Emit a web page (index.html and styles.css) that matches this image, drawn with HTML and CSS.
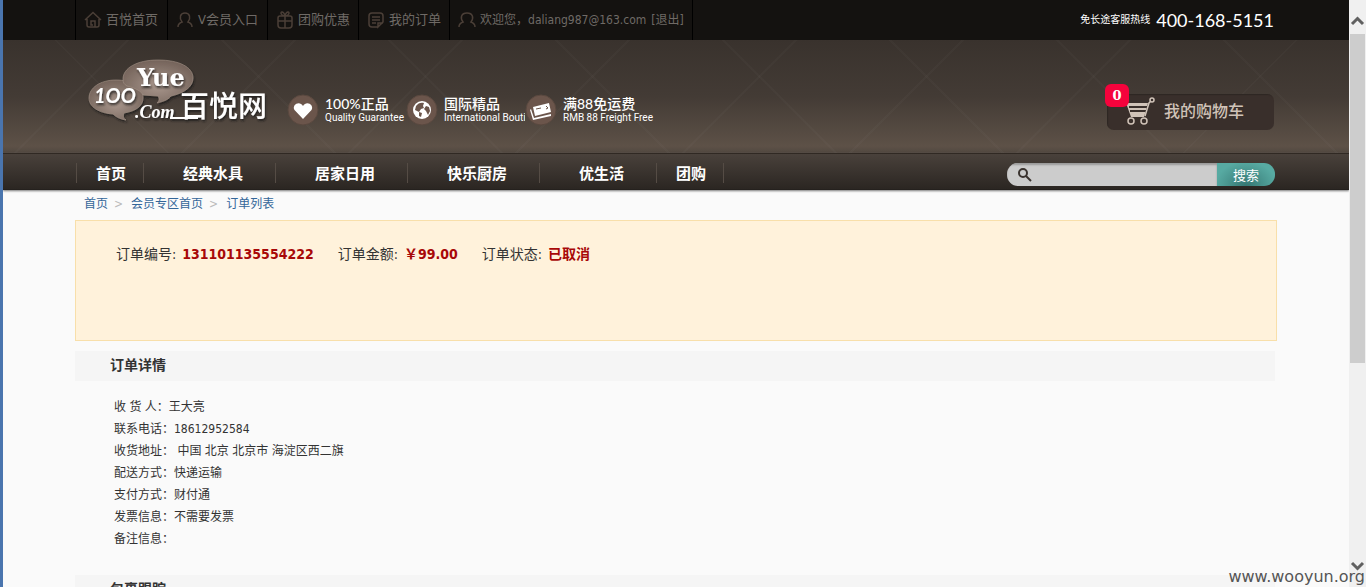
FILE: index.html
```html
<!DOCTYPE html>
<html lang="zh-CN">
<head>
<meta charset="utf-8">
<title>订单详情 - 百悦网</title>
<link rel="stylesheet" href="styles.css">
</head>
<body>
<div class="window">
  <div class="page">
    <div class="topbar">
      <div class="container topbar-inner">
        <nav class="toplinks">
          <a class="toplink wide" href="#"><svg width="20" height="20" viewBox="0 0 20 20"><path d="M2 10 10 2.500l8 7.500M4 9v6q0 2 2 2h8q2 0 2-2V9M12 17v-6H8v4h2"/></svg>百悦首页</a>
          <a class="toplink wide" href="#"><svg width="20" height="20" viewBox="0 0 20 20"><path d="M3 17c0-3 1-4 4-5-3-4-2-9 3-9s6 5 3 9c3 1 4 2 4 5"/></svg>V会员入口</a>
          <a class="toplink" href="#"><svg width="20" height="20" viewBox="0 0 20 20"><path d="M5 6h10q2 0 2 2v7q0 3-3 3H6q-3 0-3-3V8q0-2 2-2zM10 6v12M3 11h14M10 6C6 6 5 2 7 2s3 4 3 4 1-4 3-4 1 4-3 4"/></svg>团购优惠</a>
          <a class="toplink" href="#"><svg width="20" height="20" viewBox="0 0 20 20"><path d="M12 17H6q-3 0-3-3V6q0-3 3-3h8q3 0 3 3v6l-5 5v-4h5M6 7h8M6 10h8M6 13h4"/></svg>我的订单</a>
          <span class="toplink user"><svg width="20" height="20" viewBox="0 0 20 20"><path d="M2 17c0-3 1-4 4-5-3-4-2-9 4-9s7 5 4 9c3 1 4 2 4 5"/></svg>欢迎您，daliang987@163.com <a class="logout" href="#">[退出]</a></span>
        </nav>
        <p class="hotline"><span>免长途客服热线</span><strong>400-168-5151</strong></p>
      </div>
    </div>

    <header class="header">
      <div class="container header-inner">
        <a class="logo" href="#" aria-label="百悦网">
          <svg width="190" height="70" viewBox="0 0 190 70">
            <defs>
              <radialGradient id="bubble" cx="50%" cy="60%" r="60%"><stop offset="0" stop-color="#a8968c"/><stop offset="1" stop-color="#74635a"/></radialGradient>
              <filter id="shade" x="-10%" y="-10%" width="130%" height="140%"><feDropShadow dx="1" dy="2" stdDeviation="1" flood-color="#1d1815" flood-opacity=".8"/></filter>
            </defs>
            <g filter="url(#shade)" fill="url(#bubble)" stroke="#a39287" stroke-width=".6">
              <path d="M31 25C15 25 4 33 4 43c0 9 10 15 24 16 3 3 7 5 13 6-3-2-3-4-2-7 12-2 19-7 19-15 0-11-11-18-27-18z"/>
              <path d="M73 5C52 5 38 13 38 24c0 4 1 5 4 7 9 2 15 6 16 9l15 1c2 3 1 5-1 7 8-2 12-4 14-7 13-3 22-9 22-18C108 12 94 5 73 5z"/>
            </g>
            <g class="logo-text" filter="url(#shade)">
              <text x="52" y="31" class="logo-yue">Yue</text>
              <text x="9" y="48" class="logo-hundred">1OO</text>
              <text x="50" y="63" class="logo-com">.Com</text>
              <path d="M85 63h28" stroke="#fff" stroke-width="2"/>
              <text x="95" y="62" class="logo-cn">百悦网</text>
            </g>
          </svg>
        </a>
        <ul class="promises">
          <li><svg width="32" height="32" viewBox="0 0 32 32"><circle class="disc" cx="16" cy="16" r="15"/><path class="white" d="M16 25 7.500 16c-3-5 5-10 8.500-4 3.500-6 11.500-1 8.500 4z"/></svg><p><strong>100%正品</strong><small>Quality Guarantee</small></p></li>
          <li><svg width="32" height="32" viewBox="0 0 32 32"><circle class="disc" cx="16" cy="16" r="15"/><circle class="white" cx="16" cy="16" r="9"/><path class="land" d="M10 12c2-3 5-4 8-3l-1 3 1 2-3 1-2 3-4-2zM13 18l3 1-1 4-2-1zM20 12l3 1 1 4-2 4-2-4-2-2z"/></svg><p class="clipped"><strong>国际精品</strong><small>International Boutique</small></p></li>
          <li><svg width="32" height="32" viewBox="0 0 32 32"><circle class="disc" cx="16" cy="16" r="15"/><path class="white" d="m8 13 16-4 2 9-16 4zM6 15l3 9 17-4v2L8 26 5 16z"/><path class="mark" d="m11 15 5-1M21 12l2 2-2 1"/></svg><p><strong>满88免运费</strong><small>RMB 88 Freight Free</small></p></li>
        </ul>
        <a class="cart" href="#">
          <span class="badge">0</span>
          <svg width="32" height="30" viewBox="0 0 32 30"><path class="basket" d="M2 6h22l-4 14H7z"/><path class="slots" d="M5 10h18M6 14h16"/><path class="rail" d="m21 19 4-13 2-2"/><circle class="wheel" cx="28" cy="3" r="2"/><circle class="wheel" cx="7" cy="24" r="3"/><circle class="wheel" cx="20" cy="24" r="3"/></svg>
          我的购物车
        </a>
      </div>
    </header>

    <div class="navbar">
      <div class="container navbar-inner">
        <nav class="menu">
          <a class="tight" href="#">首页</a><a href="#">经典水具</a><a href="#">居家日用</a><a href="#">快乐厨房</a><a href="#">优生活</a><a class="tight" href="#">团购</a>
        </nav>
        <form class="search">
          <label class="search-box"><svg width="16" height="16" viewBox="0 0 16 16"><circle cx="6" cy="6" r="4"/><path d="m9 9 5 5"/></svg><input type="text" aria-label="搜索"></label>
          <button type="button">搜索</button>
        </form>
      </div>
    </div>

    <main class="container">
      <nav class="crumbs"><a href="#">首页</a><span>&gt;</span><a href="#">会员专区首页</a><span>&gt;</span><a href="#">订单列表</a></nav>
      <section class="summary">
        <p>订单编号: <b>131101135554222</b></p>
        <p>订单金额: <b>￥99.00</b></p>
        <p>订单状态: <b>已取消</b></p>
      </section>
      <h2 class="bar">订单详情</h2>
      <ul class="details">
        <li>收 货 人：王大亮</li>
        <li>联系电话：18612952584</li>
        <li>收货地址： 中国 北京 北京市 海淀区西二旗</li>
        <li>配送方式：快递运输</li>
        <li>支付方式：财付通</li>
        <li>发票信息：不需要发票</li>
        <li>备注信息：</li>
      </ul>
      <h2 class="bar">包裹跟踪</h2>
    </main>
  </div>
  <div class="scrollbar">
    <svg width="17" height="34" viewBox="0 0 17 34"><path d="m3 24 5.500-5.500L14 24"/></svg>
    <div class="thumb"></div>
    <svg width="17" height="34" viewBox="0 0 17 34"><path d="m3 10 5.500 5.500L14 10"/></svg>
  </div>
  <p class="watermark">www.wooyun.org</p>
</div>
</body>
</html>
```
FILE: styles.css
```css
* { box-sizing: border-box; }
body, p, ul, h2 { margin: 0; padding: 0; }
ul { list-style: none; }
a { color: inherit; text-decoration: none; }
svg { flex: none; }
body {
  font: 12px/22px "DejaVu Sans Condensed", "Noto Sans CJK SC", sans-serif;
  color: #333;
  background: #fafafa;
}
.window {
  display: flex;
  height: 100vh;
  overflow: hidden;
  position: relative;
  border-left: 3px solid #4a75ae;
}
.page { flex: 1; min-width: 0; overflow: hidden; }
.container { max-width: 1202px; margin: 0 auto; }

.topbar { background: #141210; color: #6f6a66; }
.topbar-inner { display: flex; justify-content: space-between; align-items: center; height: 40px; }
.toplinks { display: flex; border-left: 1px solid #000; }
.toplink {
  display: flex;
  align-items: center;
  gap: 3px;
  height: 40px;
  padding: 0 8px 0 7px;
  border-right: 1px solid #000;
  font-size: 13px;
  white-space: nowrap;
}
.toplink.wide { padding-right: 9px; }
.toplink svg { fill: none; stroke: #4b3f37; stroke-width: 1.500; }
.user { font-size: 12px; }
.logout { margin-left: 2px; }
.hotline { display: flex; align-items: center; gap: 6px; color: #fff; font-size: 10px; padding-right: 3px; white-space: nowrap; }
.hotline strong { font: 18px/22px Lato, sans-serif; }

.header {
  background:
    repeating-linear-gradient(45deg, transparent 0 116px, rgba(255,255,255,.02) 116px 118px),
    repeating-linear-gradient(-45deg, transparent 0 116px, rgba(255,255,255,.02) 116px 118px),
    linear-gradient(#39322d, #433b35 50%, #5d5147 94%, #514840);
}
.header-inner { display: flex; align-items: center; height: 113px; }
.logo { align-self: flex-start; margin: 15px 0 0 10px; display: block; height: 70px; }
.logo-text { fill: #fff; }
.logo-yue { font: bold 24px "DejaVu Serif", serif; }
.logo-hundred { font: italic bold 20px Lato, sans-serif; }
.logo-com { font: italic bold 18px "Liberation Serif", serif; }
.logo-cn { font: 500 29px "Noto Sans CJK SC", sans-serif; }
.promises { display: flex; padding: 26px 0 0 12px; color: #fff; }
.promises li { display: flex; align-items: center; gap: 6px; height: 32px; white-space: nowrap; width: 119px; }
.promises strong { display: block; font: 500 14px/15px Lato, "Noto Sans CJK SC", sans-serif; }
.promises small { display: block; font: 10px/13px Roboto, sans-serif; }
.clipped { overflow: hidden; }
.disc { fill: #6b554b; stroke: #59483f; }
.white { fill: #fff; }
.land { fill: #6b554b; }
.mark { fill: none; stroke: #6b554b; }
.cart {
  position: relative;
  display: flex;
  align-items: center;
  gap: 8px;
  width: 167px;
  height: 36px;
  margin: 30px 3px 0 auto;
  padding-left: 17px;
  border-radius: 7px;
  background: #392f2b;
  box-shadow: inset 1px 1px 1px #2e2723;
  color: #d0c3b8;
  font-size: 16px;
  font-weight: 500;
}
.badge {
  position: absolute;
  left: -2px;
  top: -10px;
  width: 24px;
  border-radius: 6px;
  background: #f5033c;
  color: #fff;
  font: bold 13px/23px "DejaVu Serif", serif;
  text-align: center;
}
.basket { fill: #d0c3b8; }
.slots { stroke: #392f2b; stroke-width: 2; }
.rail, .wheel { fill: none; stroke: #d0c3b8; stroke-width: 1.500; }

.navbar {
  background: linear-gradient(#49413b, #2b2622);
  border-top: 1px solid #302923;
  border-bottom: 1px solid #25211e;
  box-shadow: 0 1px 2px #777;
}
.navbar-inner { display: flex; align-items: center; justify-content: space-between; height: 35px; }
.menu { display: flex; margin: 2px 0 0 1px; border-left: 1px solid #554c45; color: #fff; font: bold 15px/20px "Noto Sans CJK SC", sans-serif; }
.menu a { padding: 0 32px 0 39px; border-right: 1px solid #554c45; }
.menu .tight { padding: 0 17px 0 19px; }
.search { align-self: flex-end; display: flex; width: 268px; height: 23px; margin: 0 2px 3px 0; border-radius: 11px; overflow: hidden; }
.search-box { flex: 1; display: flex; align-items: center; padding-left: 10px; background: #ccc; box-shadow: inset 0 2px 2px #999; }
.search-box svg { fill: none; stroke: #3a332f; stroke-width: 2; }
.search-box input { flex: 1; min-width: 0; border: 0; outline: 0; background: transparent; }
.search button { width: 58px; border: 0; padding: 0; background: radial-gradient(ellipse at 50% 100%, #357672, #57aaa2 75%); color: #fff; font: 13px/20px "Noto Sans CJK SC", sans-serif; }

.crumbs { display: flex; gap: 6px; padding: 3px 9px 5px; color: #336699; }
.crumbs span { color: #bbb; padding-right: 2px; }
.summary {
  display: flex;
  gap: 24px;
  height: 121px;
  padding: 22px 40px;
  border: 1px solid #f8dfaa;
  background: #fff2db;
  font-size: 14px;
}
.summary b { margin-left: 2px; color: #a80808; }
.bar { margin: 10px 2px 0 0; padding: 3px 35px 5px; background: #f5f5f5; font-size: 14px; line-height: 22px; }
.details { padding: 15px 39px; }

.scrollbar { width: 17px; display: flex; flex-direction: column; background: #f0f0f0; }
.scrollbar svg { fill: none; stroke: #606060; stroke-width: 3; }
.thumb { flex: 0 0 56%; margin: 0 1px; background: #cdcdcd; }
.scrollbar svg:last-child { margin-top: auto; }
.watermark { position: absolute; right: 1px; bottom: 0; color: #555; font: 16px/20px "DejaVu Sans", sans-serif; }
```
